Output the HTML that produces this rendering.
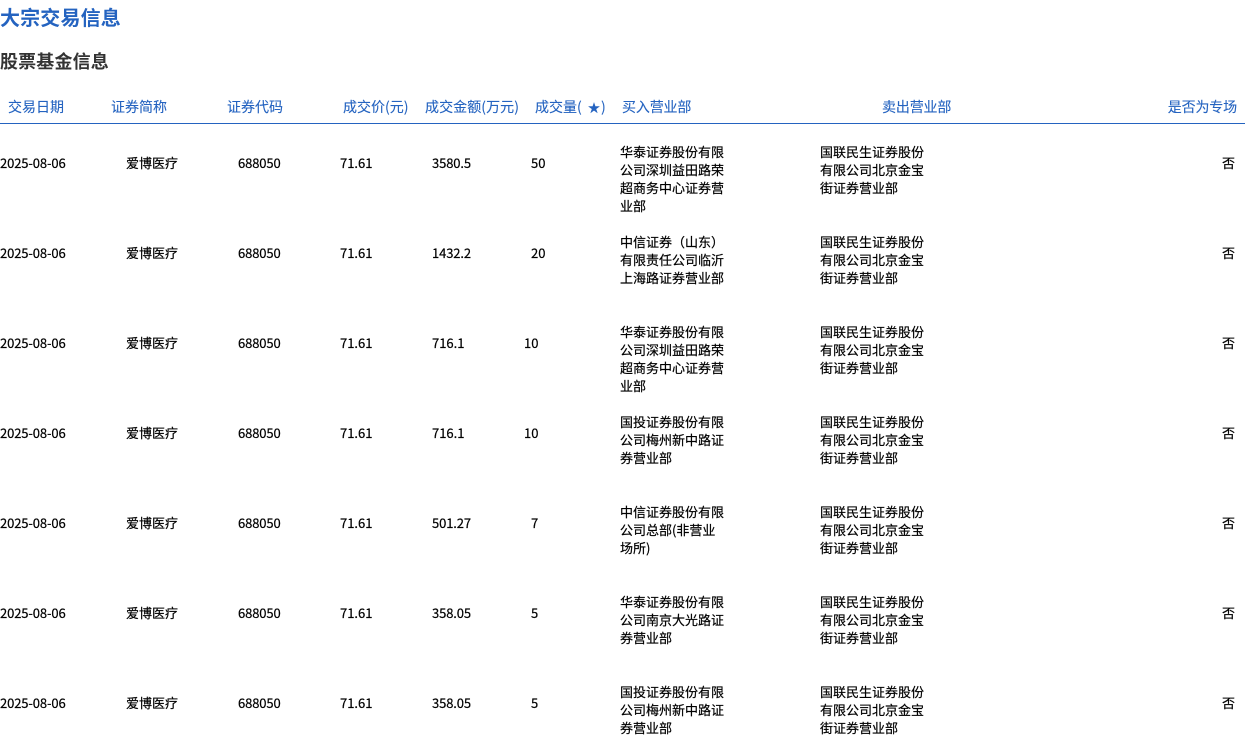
<!DOCTYPE html>
<html lang="zh">
<head>
<meta charset="utf-8">
<title>大宗交易信息</title>
<style>
html,body{margin:0;padding:0;background:#fff}
body{width:1245px;height:754px;overflow:hidden;position:relative;font-family:"Noto Sans CJK SC","Liberation Sans",sans-serif;color:#000}
.a{position:absolute;white-space:nowrap}
h1,h2{margin:0;position:absolute;left:0;white-space:nowrap}
h1{top:3px;font-size:20px;line-height:28px;color:#2463c0;font-weight:700;letter-spacing:.15px}
h2{top:48px;font-size:18px;line-height:26px;color:#333;font-weight:700;letter-spacing:.15px}
.h{top:97px;font-size:14px;line-height:20px;color:#2463c0;-webkit-text-stroke:.12px #2463c0}
.line{position:absolute;left:0;top:123px;width:1245px;height:1px;background:#2463c0}
.c,.m{font-size:13px;line-height:18px;-webkit-text-stroke:.2px #000}
.d{letter-spacing:-.12px}
.m{width:110px;white-space:normal}
</style>
</head>
<body>
<h1>大宗交易信息</h1>
<h2>股票基金信息</h2>
<div class="a h" style="left:8px">交易日期</div>
<div class="a h" style="left:111px">证券简称</div>
<div class="a h" style="left:227px">证券代码</div>
<div class="a h" style="left:343px">成交价(元)</div>
<div class="a h" style="left:425px;letter-spacing:.07px">成交金额(万元)</div>
<div class="a h" style="left:535px">成交量(</div>
<div class="a h" style="left:588px;top:98px;font-size:12px;font-family:'Liberation Sans','Noto Sans CJK SC',sans-serif">★</div>
<div class="a h" style="left:601px">)</div>
<div class="a h" style="left:622px;letter-spacing:-.15px">买入营业部</div>
<div class="a h" style="left:882px;letter-spacing:-.15px">卖出营业部</div>
<div class="a h" style="right:8px;letter-spacing:-.15px">是否为专场</div>
<div class="line"></div>

<div class="a c d" style="left:0;top:154px">2025-08-06</div><div class="a c" style="left:126px;top:154px">爱博医疗</div><div class="a c d" style="left:238px;top:154px">688050</div><div class="a c" style="left:340px;top:154px">71.61</div><div class="a c d" style="left:432px;top:154px">3580.5</div><div class="a c" style="left:531px;top:154px">50</div><div class="a m" style="left:620px;top:143px">华泰证券股份有限<br>公司深圳益田路荣<br>超商务中心证券营<br>业部</div><div class="a m" style="left:820px;top:143px">国联民生证券股份<br>有限公司北京金宝<br>街证券营业部</div><div class="a c" style="left:1222px;top:154px">否</div>

<div class="a c d" style="left:0;top:244px">2025-08-06</div><div class="a c" style="left:126px;top:244px">爱博医疗</div><div class="a c d" style="left:238px;top:244px">688050</div><div class="a c" style="left:340px;top:244px">71.61</div><div class="a c d" style="left:432px;top:244px">1432.2</div><div class="a c" style="left:531px;top:244px">20</div><div class="a m" style="left:620px;top:233px">中信证券（山东）<br>有限责任公司临沂<br>上海路证券营业部</div><div class="a m" style="left:820px;top:233px">国联民生证券股份<br>有限公司北京金宝<br>街证券营业部</div><div class="a c" style="left:1222px;top:244px">否</div>

<div class="a c d" style="left:0;top:334px">2025-08-06</div><div class="a c" style="left:126px;top:334px">爱博医疗</div><div class="a c d" style="left:238px;top:334px">688050</div><div class="a c" style="left:340px;top:334px">71.61</div><div class="a c" style="left:432px;top:334px">716.1</div><div class="a c" style="left:524px;top:334px">10</div><div class="a m" style="left:620px;top:323px">华泰证券股份有限<br>公司深圳益田路荣<br>超商务中心证券营<br>业部</div><div class="a m" style="left:820px;top:323px">国联民生证券股份<br>有限公司北京金宝<br>街证券营业部</div><div class="a c" style="left:1222px;top:334px">否</div>

<div class="a c d" style="left:0;top:424px">2025-08-06</div><div class="a c" style="left:126px;top:424px">爱博医疗</div><div class="a c d" style="left:238px;top:424px">688050</div><div class="a c" style="left:340px;top:424px">71.61</div><div class="a c" style="left:432px;top:424px">716.1</div><div class="a c" style="left:524px;top:424px">10</div><div class="a m" style="left:620px;top:413px">国投证券股份有限<br>公司梅州新中路证<br>券营业部</div><div class="a m" style="left:820px;top:413px">国联民生证券股份<br>有限公司北京金宝<br>街证券营业部</div><div class="a c" style="left:1222px;top:424px">否</div>

<div class="a c d" style="left:0;top:514px">2025-08-06</div><div class="a c" style="left:126px;top:514px">爱博医疗</div><div class="a c d" style="left:238px;top:514px">688050</div><div class="a c" style="left:340px;top:514px">71.61</div><div class="a c d" style="left:432px;top:514px">501.27</div><div class="a c" style="left:531px;top:514px">7</div><div class="a m" style="left:620px;top:503px">中信证券股份有限<br>公司总部(非营业<br>场所)</div><div class="a m" style="left:820px;top:503px">国联民生证券股份<br>有限公司北京金宝<br>街证券营业部</div><div class="a c" style="left:1222px;top:514px">否</div>

<div class="a c d" style="left:0;top:604px">2025-08-06</div><div class="a c" style="left:126px;top:604px">爱博医疗</div><div class="a c d" style="left:238px;top:604px">688050</div><div class="a c" style="left:340px;top:604px">71.61</div><div class="a c d" style="left:432px;top:604px">358.05</div><div class="a c" style="left:531px;top:604px">5</div><div class="a m" style="left:620px;top:593px">华泰证券股份有限<br>公司南京大光路证<br>券营业部</div><div class="a m" style="left:820px;top:593px">国联民生证券股份<br>有限公司北京金宝<br>街证券营业部</div><div class="a c" style="left:1222px;top:604px">否</div>

<div class="a c d" style="left:0;top:694px">2025-08-06</div><div class="a c" style="left:126px;top:694px">爱博医疗</div><div class="a c d" style="left:238px;top:694px">688050</div><div class="a c" style="left:340px;top:694px">71.61</div><div class="a c d" style="left:432px;top:694px">358.05</div><div class="a c" style="left:531px;top:694px">5</div><div class="a m" style="left:620px;top:683px">国投证券股份有限<br>公司梅州新中路证<br>券营业部</div><div class="a m" style="left:820px;top:683px">国联民生证券股份<br>有限公司北京金宝<br>街证券营业部</div><div class="a c" style="left:1222px;top:694px">否</div>
</body>
</html>
